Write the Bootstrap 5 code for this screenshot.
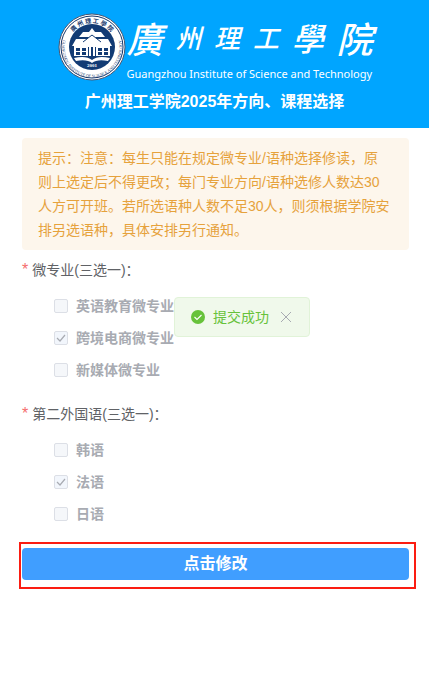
<!DOCTYPE html>
<html lang="zh-CN">
<head>
<meta charset="utf-8">
<meta name="viewport" content="width=device-width, initial-scale=1">
<title>广州理工学院2025年方向、课程选择</title>
<link href="https://cdn.jsdelivr.net/npm/bootstrap@5.3.0/dist/css/bootstrap.min.css" rel="stylesheet">
<style>
body { font-family: "Liberation Sans", "Noto Sans CJK SC", sans-serif; font-size: 14px; color: #606266; background: #fff; }
.site-head { background: #00a5ff; padding: 12px 56px 14px; }
.seal { width: 70px; height: 70px; }
.wordmark { width: 246px; }
.brush { height: 50px; font-family: "Noto Sans CJK TC", sans-serif; font-style: italic; font-weight: 500; line-height: 48px; }
.brush-l { font-size: 36px; }
.brush-m { font-size: 32px; }
.brush-s { font-size: 26px; }
.english { font-family: "Noto Sans", sans-serif; font-size: 11px; line-height: 16px; }
.site-title { font-size: 16px; line-height: 24px; margin-top: 8px; }
.page-body { padding: 10px 20px 0 22px; }
.hint { background: #fdf6ec; color: #e6a23c; line-height: 24px; padding: 8px 18px 8px 16px; border-radius: 4px; }
.group-label { font-size: 14px; line-height: 40px; }
.star { color: #f56c6c; font-size: 16px; line-height: 24px; margin-right: 4px; }
.choices { padding-left: 32px; }
.choice { height: 32px; }
.choice label { font-weight: 700; color: #a8abb2; padding-left: 8px; line-height: 32px; }
.choice .form-check-input { width: 14px; height: 14px; margin: 0; border: 1px solid #dcdfe6; border-radius: 2px; background-color: #f5f7fa; opacity: 1; }
.choice .form-check-input:checked { background-color: #f2f6fc; background-size: 12px 12px; background-image: url("data:image/svg+xml,%3Csvg xmlns='http://www.w3.org/2000/svg' viewBox='0 0 12 12'%3E%3Cpath d='M2 6l3 3 5-6' fill='none' stroke='%23a8abb2' stroke-width='1.2'/%3E%3C/svg%3E"); }
.choice .form-check-input:disabled ~ label { opacity: 1; }
.second { margin-top: 8px; }
.marked { border: 2px solid #fb1d12; margin: 12px -7px 0 -3px; padding: 4px 5px 7px 1px; }
.edit-btn { height: 32px; background: #409eff; border: 0; border-radius: 4px; color: #fff; font-size: 16px; font-weight: 700; line-height: 32px; padding: 0; }
.message { top: 297px; left: 174px; width: 136px; height: 40px; padding: 0 17px 0 16px; background: #f0f9eb; border: 1px solid #e1f3d8; border-radius: 4px; color: #67c23a; }
.message-close { width: 12px; height: 12px; line-height: 0; color: #a8abb2; }
</style>
</head>
<body>
<header class="site-head text-white">
  <div class="d-flex justify-content-center">
    <svg class="seal flex-shrink-0" viewBox="0 0 70 70" role="img" aria-label="校徽">
      <defs>
        <path id="arcTop" d="M11 35a24 24 0 0 1 48 0"/>
        <path id="arcLow" d="M12 16A30 30 0 1 0 58 16"/>
      </defs>
      <circle cx="35" cy="35" r="33" fill="#fff" stroke="#4a5570" stroke-width="1"/>
      <circle cx="35" cy="35" r="31" fill="none" stroke="#15366a" stroke-width="1"/>
      <circle cx="35" cy="35" r="23" fill="#123b74"/>
      <text font-family="Noto Sans CJK TC" font-size="6" font-weight="700" fill="#15366a"><textPath href="#arcTop" startOffset="50%" text-anchor="middle">廣 州 理 工 學 院</textPath></text>
      <text font-family="Liberation Serif" font-size="4" fill="#15366a"><textPath href="#arcLow" startOffset="50%" text-anchor="middle">GUANGZHOU INSTITUTE OF SCIENCE AND TECHNOLOGY</textPath></text>
      <path d="M22 25l4-5h18l4 5zM29 24l6-8 6 8zM15 34l4-7h32l4 7zM26 31l9-9 9 9z" fill="#fff"/>
      <path d="M26 30l9-7 9 7" fill="none" stroke="#123b74"/>
      <path d="M17 34h36v10H17z" fill="#fff"/>
      <path d="M19 36h4v3h-4zM25 36h4v3h-4zM41 36h4v3h-4zM47 36h4v3h-4zM19 40h4v3h-4zM25 40h4v3h-4zM41 40h4v3h-4zM47 40h4v3h-4zM31 35h1v9h-1zM34 35h2v9h-2zM38 35h1v9h-1z" fill="#123b74"/>
      <path d="M17 46q12-3 18 2 6-5 18-2l-2 3q-11-2-16 2-5-4-16-2z" fill="#fff"/>
      <text x="35" y="55" text-anchor="middle" font-family="Liberation Serif" font-size="5" font-weight="700" fill="#fff">2001</text>
    </svg>
    <div class="wordmark flex-shrink-0">
      <div class="brush d-flex justify-content-between align-items-center" lang="zh-TW"><span class="brush-l">廣</span><span class="brush-s">州</span><span class="brush-s">理</span><span class="brush-s">工</span><span class="brush-m">學</span><span class="brush-l">院</span></div>
      <div class="english text-nowrap mt-1">Guangzhou Institute of Science and Technology</div>
    </div>
  </div>
  <h1 class="site-title text-center fw-bold mb-0 text-nowrap">广州理工学院2025年方向、课程选择</h1>
</header>
<main class="page-body">
  <div class="hint" role="note">提示：注意：每生只能在规定微专业/语种选择修读，原则上选定后不得更改；每门专业方向/语种选修人数达30人方可开班。若所选语种人数不足30人，则须根据学院安排另选语种，具体安排另行通知。</div>
  <form>
    <fieldset>
      <legend class="group-label mb-0"><span class="star">*</span>微专业(三选一)：</legend>
      <div class="choices">
        <div class="choice d-flex align-items-center"><input class="form-check-input" type="checkbox" id="m1" disabled><label for="m1">英语教育微专业</label></div>
        <div class="choice d-flex align-items-center"><input class="form-check-input" type="checkbox" id="m2" checked disabled><label for="m2">跨境电商微专业</label></div>
        <div class="choice d-flex align-items-center"><input class="form-check-input" type="checkbox" id="m3" disabled><label for="m3">新媒体微专业</label></div>
      </div>
    </fieldset>
    <fieldset class="second">
      <legend class="group-label mb-0"><span class="star">*</span>第二外国语(三选一)：</legend>
      <div class="choices">
        <div class="choice d-flex align-items-center"><input class="form-check-input" type="checkbox" id="l1" disabled><label for="l1">韩语</label></div>
        <div class="choice d-flex align-items-center"><input class="form-check-input" type="checkbox" id="l2" checked disabled><label for="l2">法语</label></div>
        <div class="choice d-flex align-items-center"><input class="form-check-input" type="checkbox" id="l3" disabled><label for="l3">日语</label></div>
      </div>
    </fieldset>
    <div class="marked"><button type="button" class="edit-btn btn w-100 d-block">点击修改</button></div>
  </form>
</main>
<div class="message position-absolute d-flex align-items-center" role="alert">
  <svg class="me-2" width="14" height="14" viewBox="0 0 14 14" aria-hidden="true"><circle cx="7" cy="7" r="7" fill="#67c23a"/><path d="M3.500 7l2.500 2.500 4.500-4.500" fill="none" stroke="#fff" stroke-width="1.100"/></svg>
  <span class="text-nowrap">提交成功</span>
  <button type="button" class="message-close btn border-0 p-0 ms-auto" aria-label="关闭"><svg width="12" height="12" viewBox="0 0 12 12"><path d="M1 1l10 10M11 1L1 11" stroke="currentColor" fill="none"/></svg></button>
</div>
<script src="https://cdn.jsdelivr.net/npm/bootstrap@5.3.0/dist/js/bootstrap.bundle.min.js"></script>
</body>
</html>
